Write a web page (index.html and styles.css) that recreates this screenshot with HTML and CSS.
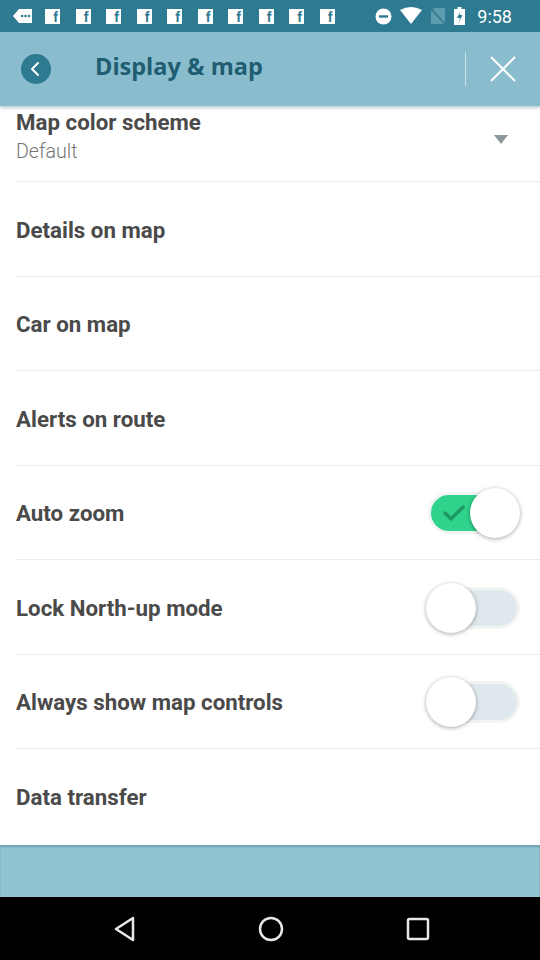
FILE: index.html
```html
<!DOCTYPE html>
<html>
<head>
<meta charset="utf-8">
<link rel="stylesheet" href="styles.css">
</head>
<body>
<div class="screen">
  <div class="statusbar">
    <div class="sb-left">
      <svg class="msg" width="20" height="16" viewBox="0 0 20 16"><path d="M6 1h13v14H6L0 8z" fill="#fff"/><circle cx="9" cy="8" r="1.3" fill="#2e7a91"/><circle cx="12.5" cy="8" r="1.3" fill="#2e7a91"/><circle cx="16" cy="8" r="1.3" fill="#2e7a91"/></svg>
      <span class="fb">f</span><span class="fb">f</span><span class="fb">f</span><span class="fb">f</span><span class="fb">f</span><span class="fb">f</span><span class="fb">f</span><span class="fb">f</span><span class="fb">f</span><span class="fb">f</span>
    </div>
    <div class="sb-right">
      <svg width="17" height="17" viewBox="0 0 17 17"><circle cx="8.5" cy="8.5" r="8" fill="#fff"/><rect x="4" y="7.3" width="9" height="2.4" fill="#2e7a91"/></svg>
      <svg width="22" height="18" viewBox="0 0 22 18"><path d="M0 3Q11 -3 22 3L11 17z" fill="#fff"/></svg>
      <svg width="16" height="18" viewBox="0 0 16 18"><path d="M4 1h11v16H1V4z" fill="#5e9bae"/><path d="M1 2L15 17" stroke="#2e7a91" stroke-width="1.6"/></svg>
      <svg width="11" height="18" viewBox="0 0 11 18"><rect x="3.5" y="0" width="4" height="2" fill="#fff"/><rect x="0" y="2" width="11" height="16" fill="#fff"/><path d="M6.5 4L3 11h3l-1.5 5L8.5 8h-3z" fill="#2e7a91"/></svg>
      <span class="time">9:58</span>
    </div>
  </div>
  <div class="header">
    <div class="back">
      <svg width="30" height="30" viewBox="0 0 30 30"><circle cx="15" cy="15" r="15" fill="#2e7a91"/><path d="M17 9l-6 6 6 6" fill="none" stroke="#fff" stroke-width="2" stroke-linecap="round" stroke-linejoin="round"/></svg>
    </div>
    <div class="title">Display &amp; map</div>
    <div class="vsep"></div>
    <div class="close">
      <svg width="26" height="26" viewBox="0 0 26 26"><path d="M1 1L25 25M25 1L1 25" stroke="#fff" stroke-width="2"/></svg>
    </div>
  </div>
  <div class="list">
    <div class="row row-first">
      <div class="texts">
        <div class="label">Map color scheme</div>
        <div class="sub">Default</div>
      </div>
      <svg class="caret" width="14" height="9" viewBox="0 0 14 9"><path d="M0 0h14L7 9z" fill="#8a9a9c"/></svg>
    </div>
    <div class="row"><div class="label">Details on map</div></div>
    <div class="row"><div class="label">Car on map</div></div>
    <div class="row"><div class="label">Alerts on route</div></div>
    <div class="row">
      <div class="label">Auto zoom</div>
      <div class="toggle on">
        <div class="track"><svg class="check" width="22" height="16" viewBox="0 0 22 16"><path d="M2 8l6 6L20 2" fill="none" stroke="#1f9a64" stroke-width="3.5" stroke-linecap="round" stroke-linejoin="round"/></svg></div>
        <div class="knob"></div>
      </div>
    </div>
    <div class="row">
      <div class="label">Lock North-up mode</div>
      <div class="toggle off">
        <div class="track"></div>
        <div class="knob"></div>
      </div>
    </div>
    <div class="row">
      <div class="label">Always show map controls</div>
      <div class="toggle off">
        <div class="track"></div>
        <div class="knob"></div>
      </div>
    </div>
    <div class="row row-last"><div class="label">Data transfer</div></div>
  </div>
  <div class="bottombar"></div>
  <div class="navbar">
    <svg width="22" height="26" viewBox="0 0 22 26"><path d="M19 2L2 13l17 11z" fill="none" stroke="#e8e8e8" stroke-width="2.5" stroke-linejoin="round"/></svg>
    <svg width="26" height="26" viewBox="0 0 26 26"><circle cx="13" cy="13" r="11" fill="none" stroke="#e8e8e8" stroke-width="2.5"/></svg>
    <svg width="24" height="24" viewBox="0 0 24 24"><rect x="2" y="2" width="20" height="20" rx="1.5" fill="none" stroke="#e8e8e8" stroke-width="2.5"/></svg>
  </div>
</div>
</body>
</html>
```
FILE: styles.css
```css
* { box-sizing: border-box; }
html, body { margin: 0; padding: 0; }
body { width: 540px; height: 960px; overflow: hidden; background: #fff; font-family: Roboto, "Liberation Sans", sans-serif; }
.screen { width: 540px; height: 960px; display: flex; flex-direction: column; }

.statusbar { height: 32px; background: #2e7a91; display: flex; align-items: center; justify-content: space-between; padding: 0 28px 0 13px; color: #fff; }
.sb-left { display: flex; align-items: center; }
.msg { margin-right: 12px; }
.fb { width: 15px; height: 15px; background: #fff; color: #2e7a91; font: bold 14px/17px "Liberation Sans", sans-serif; text-align: right; padding-right: 2px; margin-right: 15.5px; overflow: hidden; }
.sb-right { display: flex; align-items: center; gap: 8px; }
.time { font: 18px Roboto, sans-serif; margin-left: 4px; }

.header { height: 74px; background: #89bccc; display: flex; align-items: center; box-shadow: 0 2px 3px rgba(60,110,130,0.35); position: relative; z-index: 1; }
.back { width: 30px; height: 30px; margin-left: 21px; display: flex; }
.title { margin-left: 44px; flex: 1; font: bold 23.5px/1 "Open Sans", Lato, sans-serif; color: #1f5d72; padding-bottom: 4px; }
.vsep { width: 1px; height: 34px; background: #c9e3ec; }
.close { width: 74px; display: flex; justify-content: center; align-items: center; }

.list { height: 739px; display: flex; flex-direction: column; }
.row { height: 94.5px; margin-left: 16px; border-bottom: 1.5px solid #ececec; display: flex; align-items: center; justify-content: space-between; padding-top: 2px; }
.row-first { height: 76px; align-items: flex-start; padding-top: 3px; }
.row-last { border-bottom: none; }
.label { font-size: 22.3px; line-height: 26px; font-weight: bold; color: #4a4a4a; }
.sub { font-size: 19.6px; line-height: 24px; font-weight: 300; color: #757575; margin-top: 5px; }
.caret { margin-top: 26px; margin-right: 32px; }

.toggle { position: relative; width: 96px; height: 52px; margin-right: 18px; }
.toggle .track { position: absolute; left: 2px; top: 5px; width: 92px; height: 42px; border-radius: 21px; border: 3px solid #f2f4f4; }
.toggle .knob { position: absolute; top: 1px; width: 50px; height: 50px; border-radius: 50%; background: #fff; box-shadow: 0 1px 4px rgba(0,0,0,0.35); }
.toggle.on .track { background: #2fd38c; }
.toggle.on .knob { left: 44px; }
.toggle.on .check { position: absolute; left: 12px; top: 10px; }
.toggle.off .track { background: #dfe8ec; }
.toggle.off .knob { left: 0; }

.bottombar { height: 52px; background: #92c3d2; box-shadow: inset 0 2px 2px rgba(60,110,130,0.4); }
.navbar { flex: 1; background: #000; display: flex; align-items: center; justify-content: center; gap: 122px; padding-left: 4px; }
```
